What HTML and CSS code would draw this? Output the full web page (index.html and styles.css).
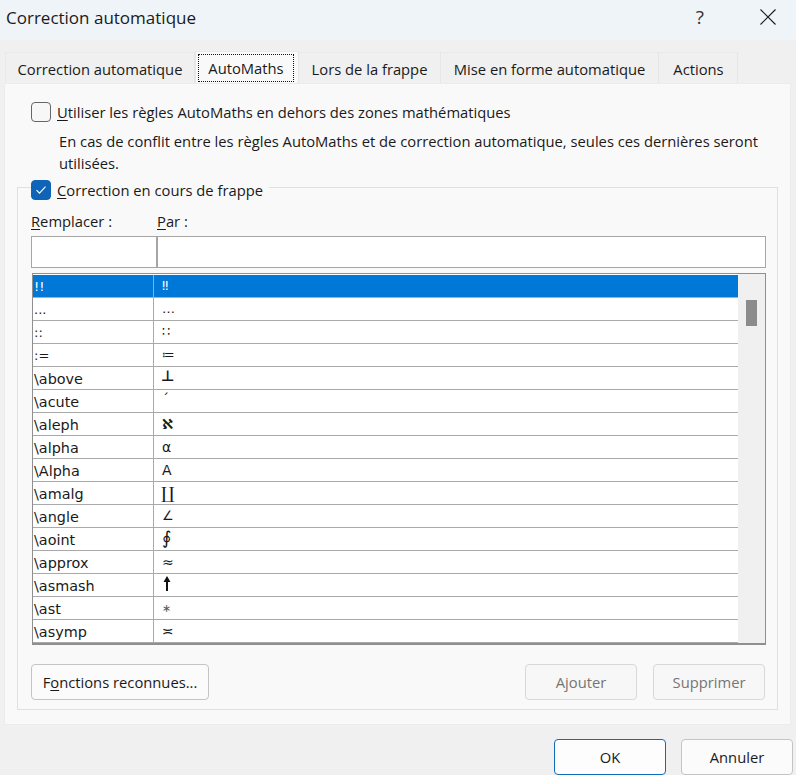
FILE: index.html
```html
<!DOCTYPE html>
<html lang="fr">
<head>
<meta charset="utf-8">
<title>Correction automatique</title>
<link rel="stylesheet" href="styles.css">
</head>
<body>
<div class="dialog">
  <header class="titlebar">
    <span class="title">Correction automatique</span>
    <span class="help">?</span>
    <svg class="close" width="16" height="16" viewBox="0 0 16 16"><path d="M.5.5l15 15M15.5.5l-15 15" stroke="#1a1a1a" stroke-width="1.1" fill="none"/></svg>
  </header>
  <nav class="tabs">
    <div class="tab t1">Correction automatique</div>
    <div class="tab active"><span class="focus">AutoMaths</span></div>
    <div class="tab t3">Lors de la frappe</div>
    <div class="tab t4">Mise en forme automatique</div>
    <div class="tab t5">Actions</div>
  </nav>
  <main class="panel">
    <div class="check-row">
      <span class="box"></span>
      <span><u>U</u>tiliser les règles AutoMaths en dehors des zones mathématiques</span>
    </div>
    <p class="note">En cas de conflit entre les règles AutoMaths et de correction automatique, seules ces dernières seront utilisées.</p>
    <section class="group">
      <div class="check-row legend">
        <span class="box checked"><svg width="12" height="10" viewBox="0 0 12 10"><path d="M1.5 5.2l3 3 6-6.5" stroke="#fff" stroke-width="1.1" fill="none"/></svg></span>
        <span><u>C</u>orrection en cours de frappe</span>
      </div>
      <div class="labels"><span class="lab-a"><u>R</u>emplacer :</span><span><u>P</u>ar :</span></div>
      <div class="inputs"><div class="in-a"></div><div class="in-b"></div></div>
      <div class="list">
        <div class="rows">
          <div class="row sel"><span class="k mini">!!</span><span class="v mini">‼</span></div>
          <div class="row"><span class="k mini">...</span><span class="v mini">…</span></div>
          <div class="row"><span class="k mini">::</span><span class="v mini">∷</span></div>
          <div class="row"><span class="k mini">:=</span><span class="v mini">≔</span></div>
          <div class="row"><span class="k">\above</span><span class="v perp">⊥</span></div>
          <div class="row"><span class="k">\acute</span><span class="v up">´</span></div>
          <div class="row"><span class="k">\aleph</span><span class="v aleph">ℵ</span></div>
          <div class="row"><span class="k">\alpha</span><span class="v">α</span></div>
          <div class="row"><span class="k">\Alpha</span><span class="v">Α</span></div>
          <div class="row"><span class="k">\amalg</span><span class="v big">∐</span></div>
          <div class="row"><span class="k">\angle</span><span class="v thin">∠</span></div>
          <div class="row"><span class="k">\aoint</span><span class="v oint">∮</span></div>
          <div class="row"><span class="k">\approx</span><span class="v">≈</span></div>
          <div class="row"><span class="k">\asmash</span><span class="v arrow"><svg width="8" height="15" viewBox="0 0 8 15"><path d="M4 0L7.5 6H5V15H3V6H.5Z" fill="#111"/></svg></span></div>
          <div class="row"><span class="k">\ast</span><span class="v tiny">∗</span></div>
          <div class="row"><span class="k">\asymp</span><span class="v">≍</span></div>
        </div>
        <div class="scroll"><div class="thumb"></div></div>
      </div>
      <div class="actions">
        <button class="btn wide">F<u>o</u>nctions reconnues...</button>
        <span class="spacer"></span>
        <button class="btn off">Ajouter</button>
        <button class="btn off">Supprimer</button>
      </div>
    </section>
  </main>
  <footer class="footer">
    <button class="btn primary">OK</button>
    <button class="btn">Annuler</button>
  </footer>
</div>
</body>
</html>
```
FILE: styles.css
```css
* { box-sizing: border-box; }
html, body { margin: 0; height: 100%; }
body {
  width: 796px; height: 775px; overflow: hidden;
  font-family: "Open Sans", "Noto Sans", sans-serif;
  font-size: 14.75px; color: #1a1a1a; background: #f0f0f0;
}
u { text-decoration-thickness: 1px; text-underline-offset: 2px; }
.dialog { display: flex; flex-direction: column; height: 775px; }
.titlebar {
  height: 40px; flex: none; background: #eff4f9;
  display: flex; align-items: center; padding: 0 20px 6px 6px;
}
.title { font-size: 17px; flex: 1; }
.help { font-size: 19px; color: #333; margin-right: 56px; }
.tabs { display: flex; height: 31px; margin: 12px 0 0 5px; flex: none; align-items: flex-end; }
.tab {
  height: 31px; background: #f0f0f0; border-top: 1px solid #e9e9e9; border-right: 1px solid #e6e6e6;
  display: flex; align-items: center; justify-content: center; padding-top: 2px;
}
.t1 { width: 190px; border-left: 1px solid #e9e9e9; }
.t3 { width: 142px; }
.t4 { width: 218px; }
.t5 { width: 79px; padding-left: 1px; }
.active { width: 104px; height: 32px; background: #f9f9f9; padding: 0 2px 0 0; border-left: 1px solid #e6e6e6; position: relative; z-index: 1; }
.focus { border: 1px dotted #111; width: 96px; height: 28px; display: flex; align-items: center; justify-content: center; }
.panel {
  margin: 0 5px 0 4px; height: 642px; flex: none; background: #f9f9f9;
  border: 1px solid #ececec;
  padding: 16px 12px 0 12px;
}
.check-row { display: flex; align-items: center; gap: 6px; height: 24px; margin-left: 14px; }
.box { width: 20px; height: 20px; border: 1px solid #666; border-radius: 4px; background: #f7f7f7; flex: none; display: flex; align-items: center; justify-content: center; }
.box.checked { background: #0f64b8; border-color: #0f64b8; }
.note { margin: 6px 0 0 42px; line-height: 22px; height: 44px; }
.group { border: 1px solid #e0e0e0; height: 523px; margin-top: 13px; padding: 0 11px 0 13px; }
.legend { background: #f9f9f9; margin: -10px 0 0 0; width: 238px; padding-right: 6px; }
.labels { display: flex; margin-top: 8px; height: 22px; align-items: center; }
.lab-a { width: 126px; }
.inputs { display: flex; height: 32px; margin-top: 4px; background: #fff; border: 1px solid #a6a6a6; }
.in-a { width: 126px; border-right: 2px solid #a6a6a6; }
.in-b { flex: 1; }
.list { display: flex; height: 372px; margin: 5px 0 0 1px; border: 1px solid #8f8f8f; border-bottom-width: 2px; background: #fff; padding: 1px 0 0 0; }
.rows { flex: 1; overflow: hidden; }
.row { display: flex; height: 23px; border-bottom: 1px solid #a9a9a9; align-items: center; line-height: 22px; white-space: nowrap; }
.row.sel { background: #0078d7; color: #fff; border-bottom-color: #7fbbe9; }
.k { width: 121px; height: 100%; border-right: 1px solid #a9a9a9; padding: 1px 0 0 1px; font-family: "DejaVu Sans", sans-serif; font-size: 14.4px; }
.v { padding-left: 8px; font-family: "DejaVu Sans", sans-serif; font-size: 14px; }
.mini { font-size: 13px; }
.up { margin-top: -4px; }
.perp { font-weight: bold; font-size: 15px; margin-top: -5px; padding-left: 7px; }
.aleph { font-weight: bold; }
.big { font-family: "DejaVu Serif", serif; font-size: 17px; padding-left: 7px; }
.thin { font-size: 13px; font-weight: 200; }
.oint { font-family: "DejaVu Serif", serif; font-size: 18px; margin-top: -3px; }
.arrow { display: flex; padding-left: 9px; margin-top: -3px; }
.tiny { font-size: 11px; color: #555; margin-top: 2px; }
.scroll { width: 27px; background: #f0f0f0; flex: none; padding: 26px 0 0 8px; margin: -1px 0 0 0; }
.thumb { width: 11px; height: 26px; background: #8c8c8c; }
.actions { display: flex; gap: 16px; margin: 19px 1px 0 0; }
.spacer { flex: 1; }
.btn {
  font: inherit; color: #1a1a1a; width: 112px; height: 36px; background: #fbfbfb;
  border: 1px solid #c4c4c4; border-radius: 4px; padding: 0;
}
.wide { width: 178px; }
.off { color: #757575; background: #f7f7f7; border-color: #d8d8d8; }
.footer { display: flex; justify-content: flex-end; gap: 15px; padding: 14px 3px 0 0; }
.primary { border: 1px solid #0f6cbd; background: #fdfdfd; }
```
